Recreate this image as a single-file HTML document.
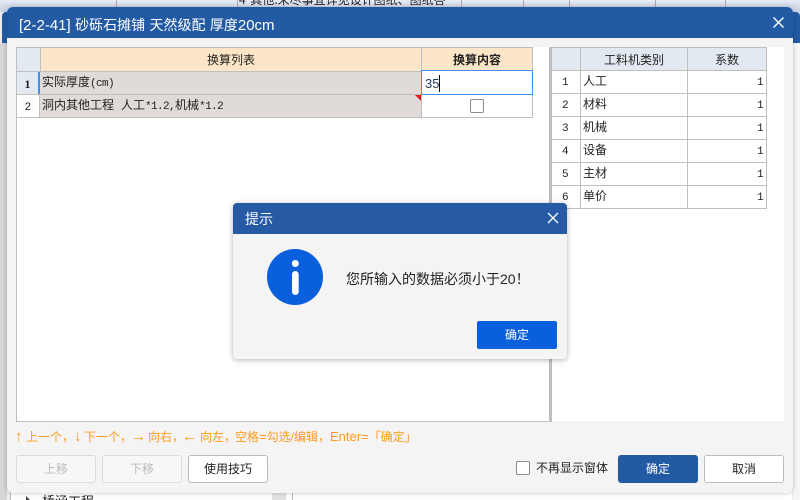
<!DOCTYPE html>
<html lang="zh">
<head>
<meta charset="utf-8">
<title>砂砾石摊铺</title>
<style>
html,body{margin:0;padding:0;width:800px;height:500px;overflow:hidden}
#root{position:absolute;left:0;top:0;width:800px;height:500px;overflow:hidden;background:#ececec;font-family:"Liberation Sans","Noto Sans CJK SC",sans-serif;color:#222}
.a{position:absolute;box-sizing:border-box}
.bm{font-family:"WenQuanYi Zen Hei","Noto Sans CJK SC",sans-serif;font-size:12px;line-height:22px;color:#222;white-space:nowrap}
.m{font-family:"Liberation Mono",monospace;font-size:11px;letter-spacing:-.6px}
.c{text-align:center}
.o{position:absolute;top:428px;font-size:12px;line-height:18px;color:#ff9a1f;white-space:nowrap}
.btn{position:absolute;box-sizing:border-box;height:28px;width:80px;top:455px;border:1px solid #bdbdbd;border-radius:3px;background:#fff;text-align:center;font-size:12px;line-height:26px;color:#222}
.off{border-color:#dcdcdc;color:#bbb;background:#f7f7f7}
.pri{background:#235aa4;border-color:#235aa4;color:#fff}
.t{font-size:15px}
.g{position:absolute;background:#bfbfbf}
</style>
</head>
<body>
<div id="root">
<!-- background window -->
<div class="a" style="left:0;top:0;width:800px;height:12px;background:linear-gradient(#e6ebf5,#c4cfe2)"></div>
<div class="a" style="left:116px;top:0;width:1px;height:8px;background:#aaa"></div>
<div class="a" style="left:237px;top:0;width:1px;height:8px;background:#aaa"></div>
<div class="a" style="left:461px;top:0;width:1px;height:8px;background:#aaa"></div>
<div class="a" style="left:523px;top:0;width:1px;height:8px;background:#aaa"></div>
<div class="a" style="left:569px;top:0;width:1px;height:8px;background:#aaa"></div>
<div class="a" style="left:655px;top:0;width:1px;height:8px;background:#aaa"></div>
<div class="a" style="left:725px;top:0;width:1px;height:8px;background:#aaa"></div>
<div class="a bm" style="left:239px;top:-11px;font-size:12px;word-spacing:2px">4 其他:未尽事宜详见设计图纸、图纸答</div>
<div class="a" style="left:2px;top:12px;width:798px;height:31px;background:#235aa4;border-radius:4px 4px 0 0"></div>
<div class="a" style="left:0;top:43px;width:7px;height:457px;background:#d6d6d6"></div>
<div class="a" style="left:793px;top:43px;width:7px;height:457px;background:#f6f6f6"></div>
<div class="a" style="left:10px;top:490px;width:262px;height:10px;background:#fff;border-left:1px solid #bbb"></div>
<div class="a" style="left:272px;top:490px;width:14px;height:10px;background:#e2e2e2"></div>
<div class="a" style="left:286px;top:490px;width:6px;height:10px;background:#fff"></div>
<div class="a" style="left:292px;top:490px;width:500px;height:10px;background:#fff;border-left:1px solid #bbb"></div>
<div class="a bm" style="left:42px;top:490px;font-size:13px">桥涵工程</div>
<div class="a" style="left:26px;top:496px;width:0;height:0;border-left:4px solid #444;border-top:4px solid transparent;border-bottom:4px solid transparent"></div>

<!-- main dialog -->
<div class="a" style="left:7px;top:7px;width:786px;height:486px;background:#f4f4f4;border-radius:6px;box-shadow:0 0 5px rgba(0,0,0,.25);overflow:hidden">
  <div class="a" style="left:0;top:0;width:786px;height:31px;background:#235aa4"></div>
</div>
<div class="a" style="left:19px;top:14px;color:#fff;font-size:14px;line-height:22px;white-space:nowrap;word-spacing:.5px"><span class="t">[2-2-41]</span> 砂砾石摊铺 天然级配 厚度<span class="t">20cm</span></div>
<svg class="a" style="left:772px;top:16px" width="14" height="14" viewBox="0 0 14 14"><path d="M1.500 1.500L11.500 11.500M11.500 1.500L1.500 11.500" stroke="#fff" stroke-width="1.400" fill="none"/></svg>

<!-- white panel -->
<div class="a" style="left:16px;top:47px;width:768px;height:374px;background:#fff"></div>
<!-- left table -->
<div class="g" style="left:16px;top:47px;width:1px;height:375px"></div>
<div class="g" style="left:16px;top:421px;width:534px;height:1px"></div>
<div class="a" style="left:17px;top:48px;width:23px;height:23px;background:#e3e9f1"></div>
<div class="a" style="left:41px;top:48px;width:380px;height:23px;background:#fde6c8"></div>
<div class="a" style="left:422px;top:48px;width:110px;height:23px;background:#fde6c8"></div>
<div class="a" style="left:17px;top:72px;width:23px;height:22px;background:#e3e9f1"></div>
<div class="a" style="left:38px;top:72px;width:2px;height:22px;background:#3f8ef0"></div>
<div class="a" style="left:40px;top:72px;width:381px;height:22px;background:#e0dbd8"></div>
<div class="a" style="left:40px;top:95px;width:381px;height:22px;background:#e0dbd8"></div>
<div class="g" style="left:16px;top:47px;width:517px;height:1px"></div>
<div class="g" style="left:16px;top:71px;width:517px;height:1px"></div>
<div class="g" style="left:16px;top:94px;width:517px;height:1px"></div>
<div class="g" style="left:16px;top:117px;width:517px;height:1px"></div>
<div class="g" style="left:40px;top:47px;width:1px;height:25px"></div>
<div class="g" style="left:39px;top:94px;width:1px;height:24px"></div>
<div class="g" style="left:421px;top:47px;width:1px;height:71px"></div>
<div class="g" style="left:532px;top:47px;width:1px;height:71px"></div>
<div class="a c bm" style="left:41px;top:49px;width:380px">换算列表</div>
<div class="a c bm" style="left:422px;top:49px;width:110px;font-weight:700;font-family:'Noto Sans CJK SC',sans-serif">换算内容</div>
<div class="a c" style="left:17px;top:73px;width:21px;font:700 12px/22px 'Liberation Serif',serif;color:#222">1</div>
<div class="a c bm" style="left:17px;top:95px;width:21px"><span class="m">2</span></div>
<div class="a bm" style="left:42px;top:71px">实际厚度<span class="m">(cm)</span></div>
<div class="a bm" style="left:42px;top:94px">洞内其他工程<span style="margin-left:7px">人工</span><span class="m">*1.2,</span>机械<span class="m">*1.2</span></div>
<div class="a" style="left:421px;top:70px;width:112px;height:25px;background:#fff;border:1px solid #3f8ef0"></div>
<div class="a" style="left:425px;top:73px;font-size:13px;line-height:22px;color:#1c3a5e">35</div>
<div class="a" style="left:439px;top:75px;width:1px;height:17px;background:#111"></div>
<div class="a" style="left:415px;top:95px;width:0;height:0;border-top:6px solid #e8141c;border-left:6px solid transparent"></div>
<div class="a" style="left:470px;top:99px;width:14px;height:14px;background:#fff;border:1px solid #8c8c8c;border-radius:2px"></div>

<!-- right table -->
<div class="g" style="left:549px;top:47px;width:3px;height:375px"></div>
<div class="a" style="left:552px;top:48px;width:215px;height:22px;background:#e3e9f1"></div>
<div class="g" style="left:552px;top:47px;width:215px;height:1px"></div>
<div class="g" style="left:552px;top:70px;width:215px;height:1px"></div>
<div class="g" style="left:552px;top:93px;width:215px;height:1px"></div>
<div class="g" style="left:552px;top:116px;width:215px;height:1px"></div>
<div class="g" style="left:552px;top:139px;width:215px;height:1px"></div>
<div class="g" style="left:552px;top:162px;width:215px;height:1px"></div>
<div class="g" style="left:552px;top:185px;width:215px;height:1px"></div>
<div class="g" style="left:552px;top:208px;width:215px;height:1px"></div>
<div class="g" style="left:580px;top:47px;width:1px;height:162px"></div>
<div class="g" style="left:687px;top:47px;width:1px;height:162px"></div>
<div class="g" style="left:766px;top:47px;width:1px;height:162px"></div>
<div class="a c bm" style="left:581px;top:49px;width:106px">工料机类别</div>
<div class="a c bm" style="left:688px;top:49px;width:78px">系数</div>
<div class="a c bm" style="left:552px;top:70px;width:26px"><span class="m">1</span></div><div class="a bm" style="left:583px;top:70px">人工</div><div class="a bm" style="left:700px;top:70px;width:63px;text-align:right"><span class="m">1</span></div>
<div class="a c bm" style="left:552px;top:93px;width:26px"><span class="m">2</span></div><div class="a bm" style="left:583px;top:93px">材料</div><div class="a bm" style="left:700px;top:93px;width:63px;text-align:right"><span class="m">1</span></div>
<div class="a c bm" style="left:552px;top:116px;width:26px"><span class="m">3</span></div><div class="a bm" style="left:583px;top:116px">机械</div><div class="a bm" style="left:700px;top:116px;width:63px;text-align:right"><span class="m">1</span></div>
<div class="a c bm" style="left:552px;top:139px;width:26px"><span class="m">4</span></div><div class="a bm" style="left:583px;top:139px">设备</div><div class="a bm" style="left:700px;top:139px;width:63px;text-align:right"><span class="m">1</span></div>
<div class="a c bm" style="left:552px;top:162px;width:26px"><span class="m">5</span></div><div class="a bm" style="left:583px;top:162px">主材</div><div class="a bm" style="left:700px;top:162px;width:63px;text-align:right"><span class="m">1</span></div>
<div class="a c bm" style="left:552px;top:185px;width:26px"><span class="m">6</span></div><div class="a bm" style="left:583px;top:185px">单价</div><div class="a bm" style="left:700px;top:185px;width:63px;text-align:right"><span class="m">1</span></div>

<!-- hint -->
<div class="o" style="left:15px;font-size:15px;font-weight:700">↑</div>
<div class="o" style="left:26px">上一个，</div>
<div class="o" style="left:74px;font-size:15px;font-weight:700">↓</div>
<div class="o" style="left:84px">下一个，</div>
<div class="o" style="left:131px;font-size:15px">→</div>
<div class="o" style="left:148px">向右，</div>
<div class="o" style="left:182px;font-size:15px">←</div>
<div class="o" style="left:200px">向左，</div>
<div class="o" style="left:235px;word-spacing:0">空格<span style="font-size:13px">=</span>勾选/编辑，<span style="font-size:13px">Enter=</span>「确定」</div>

<!-- buttons -->
<div class="btn off" style="left:16px">上移</div>
<div class="btn off" style="left:102px">下移</div>
<div class="btn" style="left:188px">使用技巧</div>
<div class="a" style="left:516px;top:461px;width:14px;height:14px;background:#fff;border:1px solid #8c8c8c;border-radius:2px"></div>
<div class="a" style="left:536px;top:459px;font-size:12px;line-height:18px;white-space:nowrap;color:#222">不再显示窗体</div>
<div class="btn pri" style="left:618px">确定</div>
<div class="btn" style="left:704px">取消</div>

<!-- prompt modal -->
<div class="a" style="left:233px;top:203px;width:334px;height:156px;background:#f4f4f4;border-radius:4px;box-shadow:0 1px 6px rgba(0,0,0,.3);overflow:hidden">
  <div class="a" style="left:0;top:0;width:334px;height:31px;background:#265aa5"></div>
</div>
<div class="a" style="left:245px;top:209px;color:#fff;font-size:14px;line-height:21px">提示</div>
<svg class="a" style="left:546px;top:211px" width="14" height="14" viewBox="0 0 14 14"><path d="M2 2L12 12M12 2L2 12" stroke="#fff" stroke-width="1.300" fill="none"/></svg>
<svg class="a" style="left:267px;top:249px" width="56" height="56" viewBox="0 0 56 56"><circle cx="28" cy="28" r="28" fill="#0a5fdc"/><circle cx="28.300" cy="14.500" r="3.500" fill="#fff"/><rect x="25" y="22" width="6.700" height="24" rx="3.350" fill="#fff"/></svg>
<div class="a" style="left:346px;top:269px;font-size:14px;line-height:20px;color:#222;white-space:nowrap">您所输入的数据必须小于20！</div>
<div class="a" style="left:477px;top:321px;width:80px;height:28px;background:#0a5fdc;border-radius:2px;color:#fff;font-size:12px;line-height:28px;text-align:center">确定</div>
</div>
</body>
</html>
